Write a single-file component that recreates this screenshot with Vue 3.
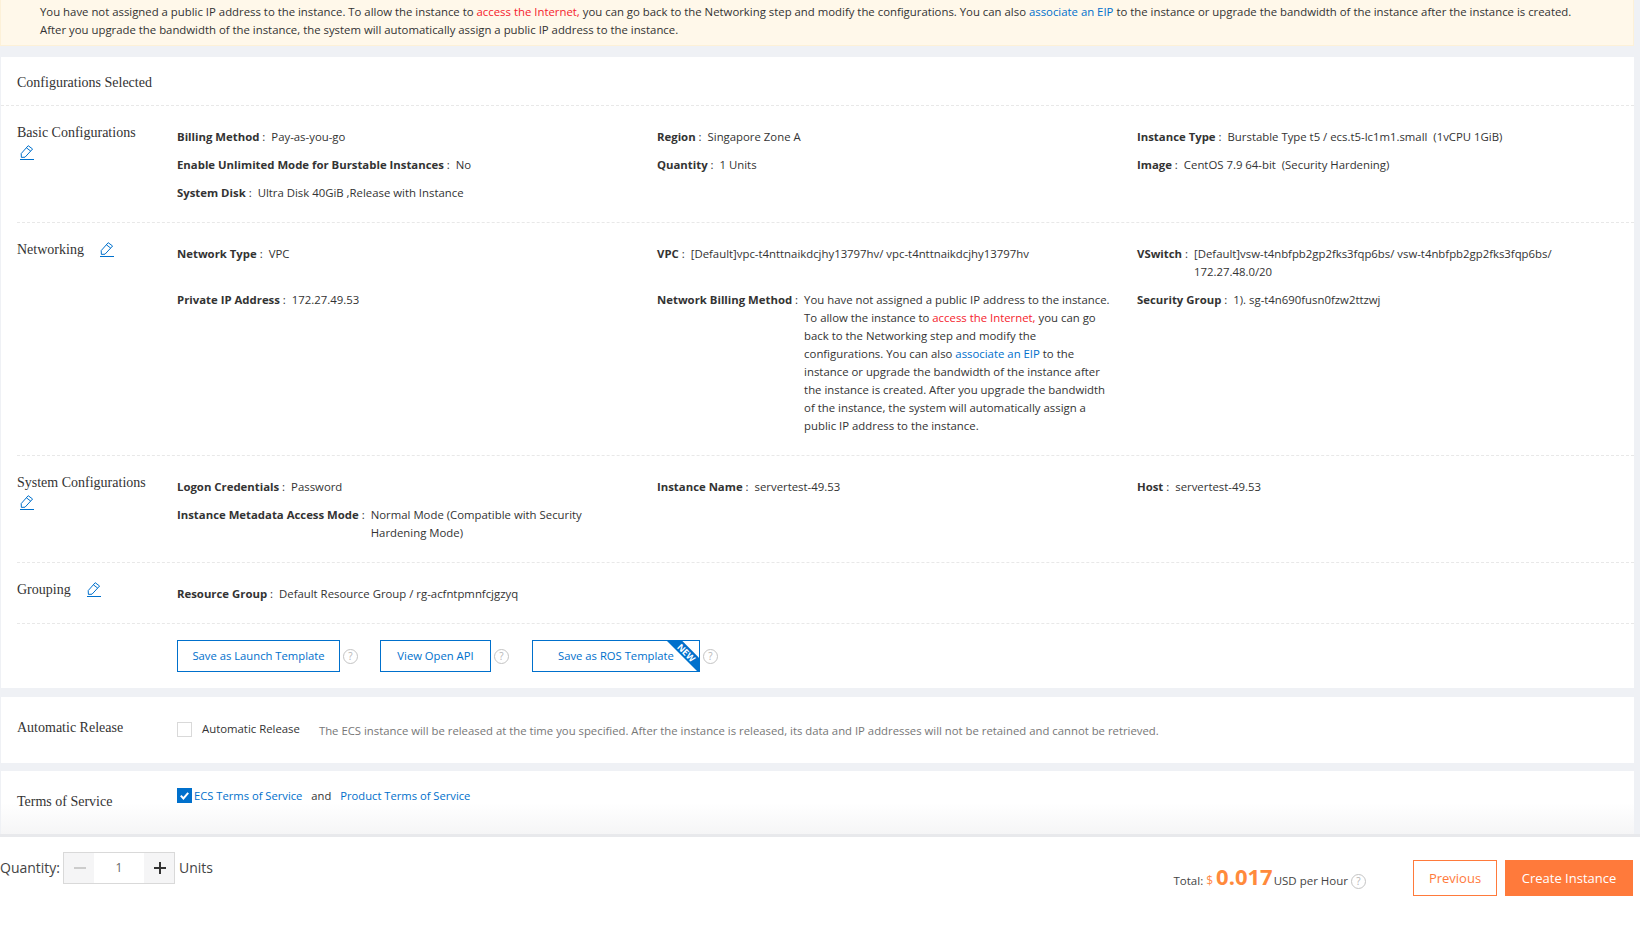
<script setup>
const sections = [
  { label: 'Basic Configurations', wrapIcon: true, items: [
    { k: 'Billing Method', v: 'Pay-as-you-go' },
    { k: 'Region', v: 'Singapore Zone A' },
    { k: 'Instance Type', v: 'Burstable Type t5 / ecs.t5-lc1m1.small  (1vCPU 1GiB)' },
    { k: 'Enable Unlimited Mode for Burstable Instances', v: 'No' },
    { k: 'Quantity', v: '1 Units' },
    { k: 'Image', v: 'CentOS 7.9 64-bit  (Security Hardening)' },
    { k: 'System Disk', v: 'Ultra Disk 40GiB ,Release with Instance' }
  ] },
  { label: 'Networking', items: [
    { k: 'Network Type', v: 'VPC' },
    { k: 'VPC', v: '[Default]vpc-t4nttnaikdcjhy13797hv/ vpc-t4nttnaikdcjhy13797hv' },
    { k: 'VSwitch', v: '[Default]vsw-t4nbfpb2gp2fks3fqp6bs/ vsw-t4nbfpb2gp2fks3fqp6bs/ 172.27.48.0/20' },
    { k: 'Private IP Address', v: '172.27.49.53' },
    { k: 'Network Billing Method', rich: true },
    { k: 'Security Group', v: '1). sg-t4n690fusn0fzw2ttzwj' }
  ] },
  { label: 'System Configurations', wrapIcon: true, items: [
    { k: 'Logon Credentials', v: 'Password' },
    { k: 'Instance Name', v: 'servertest-49.53' },
    { k: 'Host', v: 'servertest-49.53' },
    { k: 'Instance Metadata Access Mode', v: 'Normal Mode (Compatible with Security Hardening Mode)' }
  ] },
  { label: 'Grouping', items: [
    { k: 'Resource Group', v: 'Default Resource Group / rg-acfntpmnfcjgzyq' }
  ] }
]
</script>

<template>
  <div class="page">
    <div class="scroll">
      <div class="banner">
        You have not assigned a public IP address to the instance. To allow the instance to <span class="red">access the Internet,</span> you can go back to the Networking step and modify the configurations. You can also <span class="blue">associate an EIP</span> to the instance or upgrade the bandwidth of the instance after the instance is created.<br>
        After you upgrade the bandwidth of the instance, the system will automatically assign a public IP address to the instance.
      </div>

      <section class="card">
        <h2 class="title">Configurations Selected</h2>
        <div v-for="s in sections" :key="s.label" class="section">
          <div class="label">
            <span class="label-text">{{ s.label }}</span>
            <svg class="edit" :class="{ wrapped: s.wrapIcon }" viewBox="0 0 14 15" width="14" height="15" fill="none" stroke="#0070cc" stroke-width="1">
              <path d="M8.2.7l4.4 3.3L5 12.2l-3.6.2-.2-3.8z" stroke-linejoin="round" />
              <path d="M6.4 2.8l4.3 3.3" />
              <path d="M0 14.5h14" />
            </svg>
          </div>
          <div class="grid">
            <div v-for="it in s.items" :key="it.k" class="item">
              <span class="key">{{ it.k }}<span class="colon"> :</span></span>
              <span v-if="it.rich" class="val">You have not assigned a public IP address to the instance. To allow the instance to <span class="red">access the Internet,</span> you can go back to the Networking step and modify the configurations. You can also <span class="blue">associate an EIP</span> to the instance or upgrade the bandwidth of the instance after the instance is created. After you upgrade the bandwidth of the instance, the system will automatically assign a public IP address to the instance.</span>
              <span v-else class="val">{{ it.v }}</span>
            </div>
          </div>
        </div>
        <div class="actions">
          <button class="tpl launch">Save as Launch Template</button>
          <span class="help">?</span>
          <button class="tpl api">View Open API</button>
          <span class="help">?</span>
          <button class="tpl ros">
            Save as ROS Template
            <span class="ribbon"><span class="new">NEW</span></span>
          </button>
          <span class="help">?</span>
        </div>
      </section>

      <section class="card release">
        <h2 class="row-label">Automatic Release</h2>
        <span class="box"></span>
        <span class="auto">Automatic Release</span>
        <span class="hint">The ECS instance will be released at the time you specified. After the instance is released, its data and IP addresses will not be retained and cannot be retrieved.</span>
      </section>

      <section class="card terms">
        <h2 class="row-label terms-label">Terms of Service</h2>
        <div class="terms-body">
          <span class="box checked">
            <svg viewBox="0 0 13 13" width="13" height="13"><path d="M2.8 6.6l2.6 2.8 4.8-5.6" fill="none" stroke="#fff" stroke-width="2" /></svg>
          </span>
          <span class="blue">ECS Terms of Service</span>
          <span class="and">and</span>
          <span class="blue">Product Terms of Service</span>
        </div>
      </section>
    </div>

    <footer class="footer">
      <div class="qty">
        <span class="qty-label">Quantity:</span>
        <div class="stepper">
          <span class="step minus"></span>
          <span class="num">1</span>
          <span class="step plus"></span>
        </div>
        <span class="qty-label units">Units</span>
      </div>
      <div class="total">
        <span class="t-label">Total:</span>
        <span class="dollar">$</span>
        <span class="price">0.017</span>
        <span class="usd">USD per Hour</span>
        <span class="help big">?</span>
      </div>
      <button class="btn prev">Previous</button>
      <button class="btn create">Create Instance</button>
    </footer>
  </div>
</template>

<style>
html, body { margin: 0; background: #eff1f5; }
</style>

<style scoped>
.page {
  width: 1640px;
  height: 936px;
  display: flex;
  flex-direction: column;
  overflow: hidden;
  font-family: "Open Sans", "Noto Sans", sans-serif;
  font-size: 11.37px;
  color: #333;
  background: #eff1f5;
}
.scroll { flex: 1; min-height: 0; width: 1633px; margin-left: 1px; }
.red { color: #f5222d; }
.blue { color: #0070cc; }
.banner {
  height: 46px;
  box-sizing: border-box;
  padding: 3px 0 0 39px;
  margin-left: -1px;
  background: #fff8ea;
  border: solid #fdf1d8;
  border-width: 0 1px 1px 1px;
  line-height: 18px;
  white-space: nowrap;
}
.card { background: #fff; }
.banner + .card { margin-top: 11px; }
.title {
  margin: 0;
  height: 48px;
  padding-left: 16px;
  font: 400 14px/52px "Liberation Serif", serif;
  color: #333;
  border-bottom: 1px dashed #e8e8e8;
}
.section {
  display: flex;
  margin-left: 16px;
  padding-top: 22px;
  padding-bottom: 10px;
  border-bottom: 1px dashed #e8e8e8;
  box-sizing: border-box;
}
.label {
  width: 160px;
  flex: none;
  margin-top: -5px;
  font: 14px/20px "Liberation Serif", serif;
}
.label-text { margin-right: 16px; }
.edit { vertical-align: -3px; }
.edit.wrapped { display: block; margin: 2px 0 0 3px; }
.grid {
  display: grid;
  grid-template-columns: repeat(3, 480px);
}
.item {
  display: flex;
  margin-bottom: 10px;
  line-height: 18px;
  padding-right: 24px;
  box-sizing: border-box;
}
.key { flex: none; font-weight: 700; margin-right: 6px; white-space: nowrap; }
.colon { font-weight: 400; }
.val { white-space: pre-wrap; }
.actions {
  display: flex;
  align-items: center;
  height: 64px;
  padding: 16px 0 16px 176px;
  box-sizing: border-box;
}
.tpl {
  height: 32px;
  box-sizing: border-box;
  border: 1px solid #0070cc;
  background: #fff;
  color: #0070cc;
  font: inherit;
  font-size: 11.25px;
  padding: 0 0 2px;
  position: relative;
  overflow: hidden;
}
.launch { width: 163px; }
.api { width: 111px; }
.ros { width: 168px; margin-left: 1px; }
.help {
  width: 13px;
  height: 13px;
  border: 1px solid #c4c4c4;
  border-radius: 50%;
  color: #b5b5b5;
  font-size: 10px;
  line-height: 13px;
  text-align: center;
  margin: 0 22px 0 3px;
}
.ribbon {
  position: absolute;
  top: 0;
  right: 0;
  width: 32px;
  height: 32px;
}
.ribbon::before {
  content: "";
  position: absolute;
  inset: 0;
  background: #0070cc;
  clip-path: polygon(0 0, 100% 100%, 100% 52%, 48% 0);
}
.new {
  position: absolute;
  top: 7px;
  right: -1px;
  width: 28px;
  transform: rotate(45deg);
  color: #fff;
  font-size: 9px;
  font-weight: 700;
  line-height: 10px;
  text-align: center;
}
.release {
  height: 66px;
  margin-top: 9px;
  display: flex;
  align-items: center;
}
.row-label {
  margin: 0 0 4px;
  width: 160px;
  padding-left: 16px;
  flex: none;
  font: 400 14px/20px "Liberation Serif", serif;
  color: #333;
}
.box {
  width: 13px;
  height: 13px;
  border: 1px solid #d9d9d9;
  flex: none;
  background: #fff;
  margin-bottom: 2px;
}
.auto { margin: 0 19px 0 10px; padding-bottom: 4px; }
.hint { color: #777; padding-top: 1px; font-size: 11.33px; }
.terms {
  height: 64px;
  margin-top: 8px;
  display: flex;
  background: linear-gradient(#fff 50%, #f5f5f6);
}
.terms-label { padding-top: 21px; }
.terms-body {
  display: flex;
  align-items: center;
  height: 16px;
  margin-top: 16px;
  font-size: 11.2px;
}
.checked {
  background: #0070cc;
  border-color: #0070cc;
  margin: 0 2px 0 0;
  display: flex;
}
.and { margin: 0 9px; }
.footer {
  height: 99px;
  flex: none;
  box-sizing: border-box;
  box-shadow: 0 -3px 0 #e8e9ec;
  position: relative;
  background: #fff;
  display: flex;
  padding: 23px 7px 0 0;
  align-items: flex-start;
}
.qty { display: flex; align-items: center; height: 32px; margin-top: -8px; margin-right: auto; }
.qty-label { font-size: 14px; font-weight: 500; color: #444; padding-bottom: 2px; }
.units { margin-left: 4px; }
.stepper {
  display: flex;
  margin-left: 3px;
  width: 112px;
  height: 32px;
  box-sizing: border-box;
  border: 1px solid #d9d9d9;
}
.step { width: 30px; background: #f5f5f6; position: relative; }
.num { flex: 1; text-align: center; line-height: 30px; font-size: 12px; color: #666; }
.step::before {
  content: "";
  position: absolute;
  left: 10px;
  top: 14px;
  width: 12px;
  height: 2px;
  background: #333;
}
.minus::before { background: #ccc; }
.plus::after {
  content: "";
  position: absolute;
  left: 15px;
  top: 9px;
  width: 2px;
  height: 12px;
  background: #333;
}
.total {
  display: flex;
  align-items: baseline;
  margin-right: 47px;
  height: 36px;
  color: #444;
  margin-top: -1px;
}
.t-label { font-size: 11.5px; }
.dollar { color: #ff8a4c; margin: 0 3px; font-size: 12px; }
.price { color: #ff8a3c; font-size: 22px; font-weight: 700; line-height: 35px; margin-right: 1px; }
.usd { font-size: 11.5px; }
.help.big { width: 13px; height: 13px; margin: 8px 0 0 3px; align-self: center; }
.btn {
  height: 36px;
  box-sizing: border-box;
  font: inherit;
  font-size: 13px;
  padding: 0;
}
.prev {
  width: 84px;
  margin-right: 8px;
  border: 1px solid #ff7a3b;
  background: #fff;
  color: #ff7a3b;
}
.create {
  width: 128px;
  border: 0;
  background: #ff7a3b;
  color: #fff;
}
</style>
